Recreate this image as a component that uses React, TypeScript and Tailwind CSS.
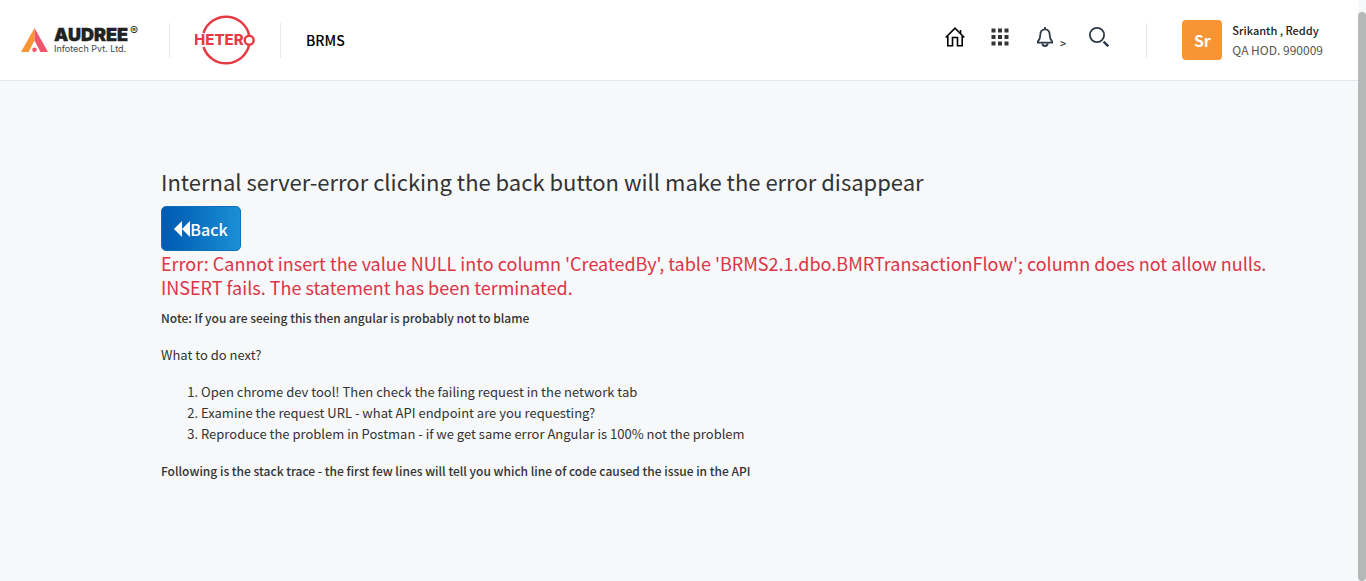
import React from "react";

function AudreeLogo() {
  return (
    <a href="#" aria-label="Audree Infotech" className="flex items-center gap-[5px]">
      <svg width="28" height="24" viewBox="0 0 28 24" aria-hidden="true">
        <path d="M13.500 0 V12.500 L7.600 24 H0 Z" fill="#f79433" />
        <path d="M13.500 0 L27 24 H19.500 L13.500 12.500 Z" fill="#f0566b" />
        <circle cx="13.500" cy="21.700" r="2.300" fill="#f0566b" />
      </svg>
      <svg width="92" height="36" viewBox="0 0 92 36" fontFamily="Inter, sans-serif" aria-hidden="true">
        <text x="0" y="19" fontSize="18" fontWeight="900" fill="#222222" stroke="#222222" strokeWidth="0.400">AUDREE</text>
        <text x="76" y="13" fontSize="12" fill="#222222">®</text>
        <text x="0" y="30" fontSize="9" fill="#444444">Infotech Pvt. Ltd.</text>
      </svg>
    </a>
  );
}

function HeteroLogo() {
  return (
    <svg width="60" height="50" viewBox="0 0 60 50" role="img" aria-label="Hetero">
      <path d="M8.500 18 A23.700 23.700 0 0 1 54.200 20.500" fill="none" stroke="#e73b43" strokeWidth="2.500" />
      <path d="M8.500 32 A23.700 23.700 0 0 0 54.200 29.500" fill="none" stroke="#e73b43" strokeWidth="2.500" />
      <text x="-1" y="30" fontSize="15" fontWeight="800" fill="#e73b43" fontFamily="Inter, sans-serif">HETER</text>
      <circle cx="54.200" cy="25.200" r="4.500" fill="#ffffff" stroke="#e73b43" strokeWidth="2.500" />
    </svg>
  );
}

function HomeIcon() {
  return (
    <svg width="20" height="20" viewBox="0 0 20 20" fill="none" stroke="#000000" strokeWidth="1.600" aria-hidden="true">
      <path d="M0.700 10.500 L10 1.200 L19.300 10.500" />
      <path d="M2.800 9 V18.700 H7.500 V10.500 H12.500 V18.700 H17.200 V9" />
      <path d="M15.500 6.500 V3" />
    </svg>
  );
}

function GridIcon() {
  return (
    <svg width="18" height="18" viewBox="0 0 18 18" fill="#333333" aria-hidden="true">
      {[0.5, 7, 13.5].map((y) =>
        [0.5, 7, 13.5].map((x) => <rect key={`${x}-${y}`} x={x} y={y} width="4" height="4" />)
      )}
    </svg>
  );
}

function BellIcon() {
  return (
    <svg width="16" height="20" viewBox="0 0 16 20" fill="none" stroke="#2e3a48" strokeWidth="1.800" aria-hidden="true">
      <path d="M8 0 V2.500" />
      <path d="M8 2.300 C4.500 2.300 3.300 5 3.300 8 C3.300 12 2.500 13 0.900 14.500 V15.700 H15.100 V14.500 C13.500 13 12.700 12 12.700 8 C12.700 5 11.500 2.300 8 2.300 Z" />
      <path d="M5.300 16.500 C5.800 19.800 10.200 19.800 10.700 16.500" />
    </svg>
  );
}

function SearchIcon() {
  return (
    <svg width="20" height="20" viewBox="0 0 20 20" fill="none" stroke="#2e3a48" aria-hidden="true">
      <circle cx="8" cy="8" r="7.100" strokeWidth="1.800" />
      <path d="M14.600 14.600 L19.300 19.300" strokeWidth="2.400" />
    </svg>
  );
}

function Divider() {
  return <div className="h-[35px] w-px bg-[#e4e7ed]" />;
}

function Header() {
  return (
    <header className="flex h-[81px] items-center border-b border-[#e4e7ed] bg-white pr-[35px] pl-[21px]">
      <AudreeLogo />
      <div className="ml-[23px] flex items-center gap-[25px]">
        <Divider />
        <HeteroLogo />
        <Divider />
        <span className="text-sm leading-5 font-medium text-black">BRMS</span>
      </div>
      <div className="ml-auto flex items-center">
        <nav className="mb-[6px] flex items-center">
          <button type="button" aria-label="Home" className="mr-[26px]"><HomeIcon /></button>
          <button type="button" aria-label="Apps" className="mr-7"><GridIcon /></button>
          <button type="button" aria-label="Notifications" className="mr-[23px] flex items-end gap-[7px]">
            <BellIcon />
            <span className="text-[11px] leading-[8px] font-medium text-[#222222]">&gt;</span>
          </button>
          <button type="button" aria-label="Search" className="mr-[37px]"><SearchIcon /></button>
        </nav>
        <Divider />
        <div className="ml-[35px] flex h-10 w-10 items-center justify-center rounded bg-[#f79433] text-base font-bold text-white">
          Sr
        </div>
        <div className="ml-[10px] leading-5">
          <div className="text-[11px] leading-5 font-medium text-[#222222]">Srikanth , Reddy</div>
          <div className="text-[12px] leading-5 text-[#555555]">QA HOD. 990009</div>
        </div>
      </div>
    </header>
  );
}

export default function App() {
  return (
    <div className="flex min-h-screen bg-[#f7f8fa] font-['Noto_Sans_CJK_SC',sans-serif] text-[#333333]">
      <div className="min-w-0 flex-1">
        <Header />
        <main className="pt-[86px] pr-20 pb-10 pl-[161px] text-[13px] leading-[21px]">
          <h1 className="mb-[10px] text-[22px] leading-[29px]">
            Internal server-error clicking the back button will make the error disappear
          </h1>
          <button
            type="button"
            className="flex h-[45px] w-20 items-center justify-center rounded-[5px] border border-[#0d70bb] bg-linear-to-r from-[#0259b0] to-[#1b8fd6] text-base font-medium text-white"
          >
            <svg width="16" height="16" viewBox="0 0 16 16" fill="currentColor" aria-hidden="true">
              <path d="M8 0 V16 L0 8 Z M16 0 V16 L8 8 Z" />
            </svg>
            Back
          </button>
          <h2 className="mb-2 text-[18px] leading-6 text-[#dc3545]">
            Error: Cannot insert the value NULL into column 'CreatedBy', table 'BRMS2.1.dbo.BMRTransactionFlow'; column
            does not allow nulls. INSERT fails. The statement has been terminated.
          </h2>
          <p className="mb-4 text-[12px] leading-[21px] font-medium">
            Note: If you are seeing this then angular is probably not to blame
          </p>
          <p className="mb-4">What to do next?</p>
          <ol className="mb-4 list-decimal pl-10">
            <li>Open chrome dev tool! Then check the failing request in the network tab</li>
            <li>Examine the request URL - what API endpoint are you requesting?</li>
            <li>Reproduce the problem in Postman - if we get same error Angular is 100% not the problem</li>
          </ol>
          <p className="text-[12px] leading-[21px] font-medium">
            Following is the stack trace - the first few lines will tell you which line of code caused the issue in the API
          </p>
        </main>
      </div>
      <div className="flex w-2 pt-3" aria-hidden="true">
        <div className="w-2 rounded bg-[#b5b8b7]" />
      </div>
    </div>
  );
}
